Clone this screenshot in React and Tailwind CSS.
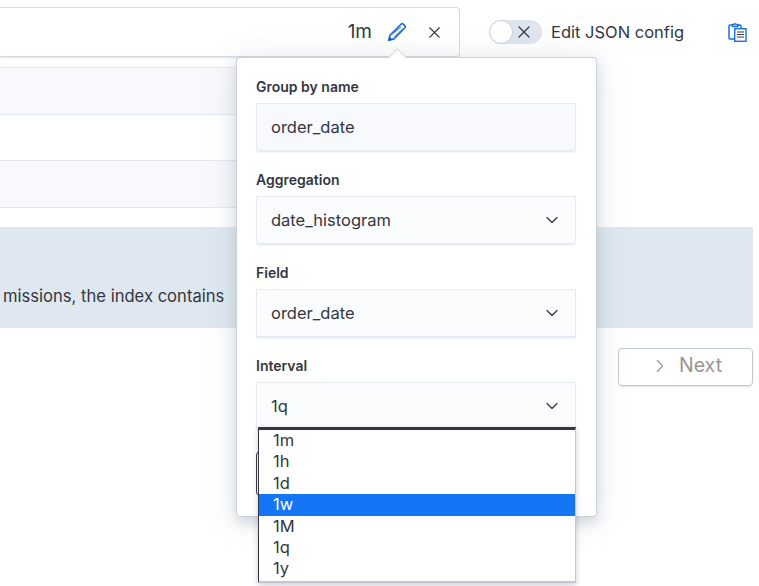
import { X, ChevronDown, ChevronRight } from "lucide-react";

const fields = [
  { label: "Group by name", value: "order_date", select: false },
  { label: "Aggregation", value: "date_histogram", select: true },
  { label: "Field", value: "order_date", select: true },
  { label: "Interval", value: "1q", select: true },
];

const options = ["1m", "1h", "1d", "1w", "1M", "1q", "1y"];

function PencilIcon() {
  return (
    <svg width="20" height="20" viewBox="0 0 18 18" fill="none" className="ml-[15px]">
      <path d="M1.5 16.5 L2.8 11.8 L12.6 2 Q13.6 1 14.7 2 L16 3.3 Q17 4.4 16 5.4 L6.2 15.2 Z" stroke="#1a6fdc" strokeWidth="1.5" strokeLinejoin="round" />
      <path d="M4.5 11 L12.6 4.4 M6.8 13.4 L14.4 6" stroke="#5c7fb0" strokeWidth="1" />
      <path d="M1.5 16.5 L2.4 13.4 L4.6 15.6 Z" fill="#0f4fb0" />
    </svg>
  );
}

function ClipboardIcon() {
  return (
    <svg width="19" height="20" viewBox="0 0 19 20" fill="none" className="ml-[44px]">
      <path d="M5 3 H2 Q1 3 1 4 V16 Q1 17 2 17 H6" stroke="#1a6fdc" strokeWidth="1.5" />
      <path d="M10 3 H12 Q13 3 13 4 V6" stroke="#1a6fdc" strokeWidth="1.5" />
      <path d="M4.5 4.5 V2.5 H6 Q7 0.8 8 2.5 H10 V4.5 Z" stroke="#1a6fdc" strokeWidth="1.3" />
      <rect x="6.7" y="6.7" width="11.3" height="12.6" stroke="#1a6fdc" strokeWidth="1.4" />
      <path d="M9 10 H16 M9 12.5 H16 M9 15 H16" stroke="#343741" strokeWidth="1" />
    </svg>
  );
}

function Field({ label, value, select }) {
  return (
    <div className="flex flex-col">
      <label className="h-[20px] text-[14px] leading-[20px] font-semibold text-[#343741]">
        {label}
      </label>
      <div
        className={`mt-[6px] flex h-[48px] items-center justify-between border border-[#e6ebf2] pl-[14px] pr-[13px] text-[16.5px] text-[#343741] shadow-[0_2px_2px_-1px_rgba(152,162,179,0.3)] ${select ? "bg-[#fbfcfd]" : "bg-[#f7f9fc]"}`}
      >
        <span>{value}</span>
        {select && <ChevronDown size={20} strokeWidth={1.5} className="text-[#343741]" />}
      </div>
    </div>
  );
}

export default function App() {
  return (
    <div className="relative h-[586px] w-[759px] overflow-hidden bg-white font-['Inter',sans-serif] text-[#343741]">
      <div className="flex h-[57px] items-end">
        <div className="flex h-[50px] w-[460px] items-center justify-end rounded-r-[4px] border border-l-0 border-[#d3dae6] bg-white pr-[15px] shadow-[0_2px_2px_-1px_rgba(152,162,179,0.3)]">
          <span className="text-[19px]">1m</span>
          <PencilIcon />
          <X size={19} strokeWidth={1.4} className="ml-[18px]" />
        </div>
        <div className="flex h-[50px] items-center pl-[29px]">
          <div className="relative flex h-[24px] w-[53px] items-center justify-end rounded-full bg-[#dfe5ee] pr-[8px]">
            <span className="absolute left-0 top-0 h-[24px] w-[24px] rounded-full border border-[#c9d0dc] bg-white"></span>
            <X size={20} strokeWidth={1.5} />
          </div>
          <span className="ml-[9px] text-[16.5px]">Edit JSON config</span>
          <ClipboardIcon />
        </div>
      </div>

      <div className="mt-[10px] flex w-[460px] flex-col">
        <div className="h-[48px] border-y border-[#e3e8f0] bg-[#f7f9fc]"></div>
        <div className="h-[45px] bg-white"></div>
        <div className="h-[48px] border-y border-[#e3e8f0] bg-[#f7f9fc]"></div>
      </div>

      <div className="mt-[19px] flex h-[101px] w-[753px] items-end bg-[#dfe8f0] pb-[22px] pl-[3px] text-[16.6px] leading-[20px]">
        missions, the index contains
      </div>

      <div className="mt-[20px] flex w-[753px] justify-end">
        <button className="flex h-[38px] w-[135px] items-center justify-center gap-[8px] rounded-[4px] border border-[#c2c8d2] bg-white pb-[2px] text-[19.5px] text-[#9a9490] shadow-[0_2px_2px_-1px_rgba(152,162,179,0.3)]">
          <ChevronRight size={22} strokeWidth={1.2} />
          Next
        </button>
      </div>

      {/* popover del grupo */}
      <div className="absolute left-[236px] top-[57px] h-[460px] w-[361px] rounded-[4px] border border-[#c8d0dc] bg-white pl-[19px] pr-[20px] pt-[19px] shadow-[0_6px_12px_-1px_rgba(152,162,179,0.35),0_4px_30px_rgba(152,162,179,0.3)]">
        <span className="absolute left-[154px] top-[-7px] h-[13px] w-[13px] rotate-45 border-l border-t border-[#d3dae6] bg-white"></span>
        <div className="flex flex-col gap-[19px]">
          {fields.map((f) => (
            <Field key={f.label} {...f} />
          ))}
        </div>
        <div className="mt-[21px] h-[45px] w-[320px] rounded-[4px] border border-[#343741]"></div>
      </div>

      {/* lista del select */}
      <ul className="absolute left-[258px] top-[427px] w-[318px] border-x border-b-2 border-t-[3px] border-l-[#343741] border-r-[#c3c8d0] border-b-[#c3c8d0] border-t-[#343741] bg-white pb-[1px] text-[16.5px] leading-[21.4px] text-[#343741] shadow-[0_2px_6px_rgba(100,110,130,0.35)]">
        {options.map((o) => (
          <li
            key={o}
            className={`pl-[14px] ${o === "1w" ? "bg-[#1475f5] text-white" : ""}`}
          >
            {o}
          </li>
        ))}
      </ul>
    </div>
  );
}
